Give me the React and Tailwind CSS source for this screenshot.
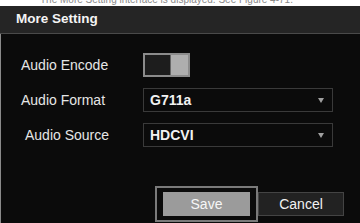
import React from "react";

function Select({ value }) {
  return (
    <div className="w-[190px] h-[24px] border border-[#3a3a3a] bg-[#0b0b0b] flex items-center justify-between pl-[6px] pr-[8px]">
      <span className="text-[14px] font-bold text-[#f2f2f2]">{value}</span>
      <span className="w-0 h-0 border-l-[3px] border-r-[3px] border-t-[5px] border-l-transparent border-r-transparent border-t-[#a0a0a0]" />
    </div>
  );
}

export default function App() {
  return (
    <div
      className="w-[360px] h-[223px] bg-white overflow-hidden flex flex-col"
      style={{ fontFamily: '"Liberation Sans", Arial, sans-serif' }}
    >
      <div className="h-[6px] overflow-hidden shrink-0">
        <p className="-mt-[6px] pl-[40px] text-[10px] leading-[11px] text-[#8a8a8a] whitespace-nowrap">
          The More Setting interface is displayed. See Figure 4-71.
        </p>
      </div>

      <div className="h-[28px] shrink-0 bg-[#252525] border-b border-[#4a4a4a] pl-[16px] flex items-center">
        <span className="text-[13.5px] font-bold text-[#f4f4f4]">More Setting</span>
      </div>

      <div className="flex-1 bg-[#0b0b0b] border-l border-[#8a8a8a] flex flex-col">
        <div className="mt-[19px] flex flex-col gap-[11px]">
          <div className="flex items-center h-[24px] pl-[20px]">
            <span className="w-[122px] text-[14px] text-[#e6e6e6]">Audio Encode</span>
            <div className="w-[47px] h-[24px] border-2 border-[#8c8c8c] flex">
              <div className="flex-1 bg-[#1d1d1d]" />
              <div className="w-[18px] bg-[#aeaeae] border-l border-[#666]" />
            </div>
          </div>
          <div className="flex items-center h-[24px] pl-[20px]">
            <span className="w-[122px] text-[14px] text-[#e6e6e6]">Audio Format</span>
            <Select value="G711a" />
          </div>
          <div className="flex items-center h-[24px] pl-[20px]">
            <span className="w-[122px] pl-[4px] text-[14px] text-[#e6e6e6]">Audio Source</span>
            <Select value="HDCVI" />
          </div>
        </div>

        <div className="mt-[39px] flex items-center justify-end pr-[16px]">
          <div className="border-2 border-[#7a7a7a] px-[6px] py-[4px]">
            <button className="w-[87px] h-[24px] bg-[#9b9b9b] text-[14px] text-[#f6f6f6] flex items-center justify-center">
              Save
            </button>
          </div>
          <button className="w-[86px] h-[24px] bg-[#222] border border-[#444] text-[14px] text-[#f2f2f2] flex items-center justify-center">
            Cancel
          </button>
        </div>
      </div>
    </div>
  );
}
